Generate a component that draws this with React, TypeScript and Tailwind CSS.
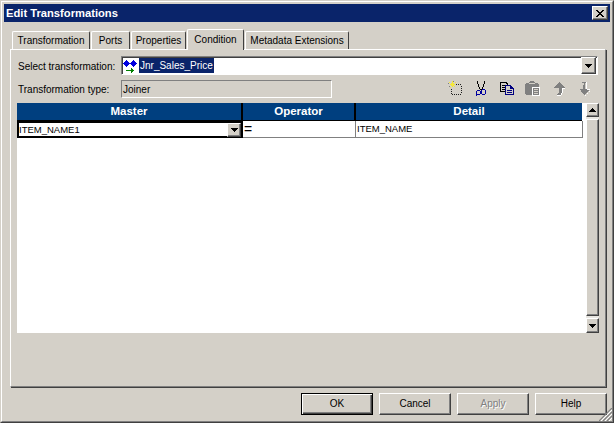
const raised = "border border-t-white border-l-white border-r-[#404040] border-b-[#404040] shadow-[inset_-1px_-1px_0_#808080]";

function Arrow({ up = false }: { up?: boolean }) {
  return (
    <svg width="7" height="4" viewBox="0 0 7 4" shapeRendering="crispEdges" className={up ? "rotate-180" : ""}>
      <path d="M0 0h7v1H0zM1 1h5v1H1zM2 2h3v1H2zM3 3h1v1H3z" fill="#000" />
    </svg>
  );
}

function Tab({ label, width, active = false }: { label: string; width: string; active?: boolean }) {
  return active ? (
    <div className={`${width} h-[21px] -mb-px z-10 flex items-start justify-center pt-[5px] whitespace-nowrap bg-[#d4d0c8] border-t border-l border-r border-t-white border-l-white border-r-[#404040] rounded-t-[2px]`}>
      {label}
    </div>
  ) : (
    <div className={`${width} h-[18px] flex items-center justify-center pt-px whitespace-nowrap bg-[#d4d0c8] border-t border-l border-r border-t-white border-l-white border-r-[#404040] rounded-t-[2px]`}>
      {label}
    </div>
  );
}

function Btn({ label, isDefault = false, disabled = false }: { label: string; isDefault?: boolean; disabled?: boolean }) {
  return (
    <div
      className={
        isDefault
          ? "w-[72px] h-[22px] flex items-center justify-center border border-black shadow-[inset_1px_1px_0_#fff,inset_-1px_-1px_0_#404040,inset_-2px_-2px_0_#808080]"
          : disabled
          ? `w-[72px] h-[22px] flex items-center justify-center text-[#808080] [text-shadow:1px_1px_0_#fff] ${raised}`
          : `w-[72px] h-[22px] flex items-center justify-center ${raised}`
      }
    >
      {label}
    </div>
  );
}

function Toolbar() {
  return (
    <div className="flex items-start h-[18px] pt-px ml-[116px]">
      {/* new */}
      <svg width="14" height="14" viewBox="0 0 14 14" shapeRendering="crispEdges">
        <path d="M6 3h1v1H6zM8 3h1v1H8zM10 3h1v1h-1zM12 3h1v1h-1zM13 5h1v1h-1zM13 7h1v1h-1zM13 9h1v1h-1zM13 11h1v1h-1zM12 13h1v1h-1zM10 13h1v1h-1zM8 13h1v1H8zM6 13h1v1H6zM4 13h1v1H4zM3 12h1v1H3zM3 10h1v1H3zM3 8h1v1H3z" fill="#202020" />
        <path d="M4 0h1v6H4zM2 3h5v1H2zM1 1h1v1H1zM7 1h1v1H7zM2 6h1v1H2zM6 5h1v1H6zM3 2h3v3H3z" fill="#f5e83a" />
        <path d="M0 2h1v1H0zM1 5h1v1H1zM5 0h1v1H5z" fill="#808080" />
      </svg>
      {/* cut */}
      <svg width="10" height="15" viewBox="0 0 10 15" className="ml-[14px]" shapeRendering="crispEdges">
        <path d="M1 0h1v3h1v3h1v2h2V6h1V3h1V0h1v3H8v3H7v2H6v1H4V8H3V6H2V3H1z" fill="#000" />
        <path d="M1 9h3v1h1v3H4v1H1v1H0V10h1zM1 10v3h3v-3zM6 8h3v1h1v4H9v1H6v-1H5V9h1zM6 9v4h3V9z" fill="#0000a0" />
      </svg>
      {/* copy */}
      <svg width="14" height="14" viewBox="0 0 14 14" className="ml-[14px]" shapeRendering="crispEdges">
        <path d="M0 1h7v1h1v2H7V3H6V2H1v8h4v1H0z" fill="#000" />
        <path d="M2 4h3v1H2zM2 6h3v1H2zM2 8h3v1H2z" fill="#000" />
        <path d="M5 4h6v1h1v1h1v1h1v7H5zM6 5v8h7V8h-3V5z" fill="#000080" />
        <path d="M7 9h5v1H7zM7 11h5v1H7z" fill="#000080" />
      </svg>
      {/* paste (disabled) */}
      <svg width="15" height="15" viewBox="0 0 15 15" className="ml-[11px]" shapeRendering="crispEdges">
        <path d="M0 3h1V2h3V1h1V0h4v1h1v1h3v1h1v4H8v7H1v-1H0z" fill="#808080" />
        <path d="M4 2h6v1H4z" fill="#d4d0c8" />
        <path d="M7 6h8v9H7z" fill="#fff" />
        <path d="M8 7h6v7H8z" fill="#808080" />
        <path d="M9 8h4v5H9z" fill="#d4d0c8" />
        <path d="M9 9h4v1H9zM9 11h4v1H9z" fill="#808080" />
      </svg>
      {/* up */}
      <svg width="12" height="15" viewBox="0 0 12 15" className="ml-[14px]" shapeRendering="crispEdges">
        <path d="M5 1h1v1h1v1h1v1h1v1h1v1h1v1H8v5H7v2H3v-1h1v-1h1V7H0V6h1V5h1V4h1V3h1V2h1z" fill="#808080" />
        <path d="M8 7h3v1H8zM8 8h1v4H8zM7 12h1v2H7zM3 14h4v1H3z" fill="#fff" />
      </svg>
      {/* down */}
      <svg width="12" height="15" viewBox="0 0 12 15" className="ml-[13px]" shapeRendering="crispEdges">
        <path d="M3 1h4v1H6v1H6v5h5v1h-1v1H9v1H8v1H7v1H6v1H5v-1H4v-1H3v-1H2V9H1V8h3V4h1V2H3z" fill="#808080" />
        <path d="M7 1h1v1H7zM7 2h1v6H7zM8 8h3v1H8zM10 10h1v1h-1zM8 12h1v1H8zM6 14h1v1H6z" fill="#fff" />
      </svg>
    </div>
  );
}

function Grid() {
  return (
    <div className="mt-[5px] w-[582px] h-[230px] flex bg-white">
      <div className="w-[569px] flex flex-col">
        <div className="flex h-[18px] w-[565px] bg-[#003f7f] text-white font-bold text-[11.5px] border-b border-b-black">
          <div className="w-[226px] flex items-center justify-center pt-px border-r-2 border-r-black">Master</div>
          <div className="w-[113px] flex items-center justify-center pt-px border-r-2 border-r-black">Operator</div>
          <div className="w-[226px] flex items-center justify-center pt-px">Detail</div>
        </div>
        <div className="flex h-[17px] w-[566px] text-[9.5px]">
          <div className="w-[226px] flex items-center justify-between border-2 border-black pr-0">
            <span>ITEM_NAME1</span>
            <div className={`w-[14px] h-[14px] flex items-center justify-center bg-[#d4d0c8] ${raised}`}>
              <Arrow />
            </div>
          </div>
          <div className="w-[113px] flex items-center pl-px text-[14px] border-r border-b border-r-[#808080] border-b-[#808080]">=</div>
          <div className="w-[227px] flex items-center pl-[1px] border-r border-b border-r-[#808080] border-b-[#808080]">ITEM_NAME</div>
        </div>
      </div>
      <div className="w-[13px] flex flex-col gap-[2px] bg-[#e8e6e1]">
        <div className={`h-[14px] bg-[#d4d0c8] flex items-center justify-center ${raised}`}>
          <Arrow up />
        </div>
        <div className={`flex-1 bg-[#d4d0c8] ${raised}`} />
        <div className={`h-[15px] bg-[#d4d0c8] flex items-center justify-center ${raised}`}>
          <Arrow />
        </div>
      </div>
    </div>
  );
}

export default function App() {
  return (
    <div className="relative w-[614px] h-[423px] overflow-hidden bg-[#d4d0c8] text-black text-[10px] leading-none font-['Liberation_Sans',Arial,sans-serif] border border-t-[#d4d0c8] border-l-[#d4d0c8] border-r-[#404040] border-b-[#404040]">
      <div className="h-full flex flex-col border border-t-white border-l-white border-r-[#808080] border-b-[#808080] p-[2px]">
        <div className="h-[18px] shrink-0 bg-[#0a246a] flex items-center justify-between pl-[2px] pr-[2px]">
          <span className="text-white font-bold text-[11.2px] pt-px">Edit Transformations</span>
          <div className={`w-[16px] h-[14px] flex items-center justify-center bg-[#d4d0c8] ${raised}`}>
            <svg width="8" height="7" viewBox="0 0 8 7" shapeRendering="crispEdges">
              <path d="M0 0h2v1h1v1h2V1h1V0h2v1H7v1H6v1H5v1h1v1h1v1h1v1H6V6H5V5H3v1H2v1H0V6h1V5h1V4h1V3H2V2H1V1H0z" fill="#000" />
            </svg>
          </div>
        </div>

        <div className="flex-1 flex flex-col pl-[6px] pr-[2px]">
          <div className="flex items-end h-[27px] pl-[2px] gap-[1px] shrink-0">
            <Tab label="Transformation" width="w-[78px]" />
            <Tab label="Ports" width="w-[39px]" />
            <Tab label="Properties" width="w-[55px]" />
            <Tab label="Condition" width="w-[57px]" active />
            <Tab label="Metadata Extensions" width="w-[104px]" />
          </div>
          <div className="h-[338px] w-[596px] shrink-0 border border-t-white border-l-white border-r-[#808080] border-b-[#808080] shadow-[1px_1px_0_#404040] pt-[6px] pl-[6px]">
            <div className="flex items-center h-[19px]">
              <span className="w-[104px] pl-px pt-[2px] whitespace-nowrap">Select transformation:</span>
              <div className="w-[477px] h-[19px] flex items-center bg-white border border-t-[#808080] border-l-[#808080] border-r-white border-b-white shadow-[inset_1px_1px_0_#404040]">
                <svg width="14" height="14" viewBox="0 0 14 14" className="ml-[1px] shrink-0" shapeRendering="crispEdges">
                  <path d="M3 1h1v1h1v1h1v1h1v1h-1v1h-1v1h-1v1h-1v-1h-1v-1h-1v-1h-1v-1h1v-1h1v-1h1zM10 1h1v1h1v1h1v1h1v1h-1v1h-1v1h-1v1h-1v-1h-1v-1h-1v-1h-1v-1h1v-1h1v-1h1z" fill="#0000e0" />
                  <path d="M3 11h7v1H3zM8 9h1v5H8zM9 10h1v3H9zM10 11h1v1h-1z" fill="#008000" />
                </svg>
                <span className="ml-[2px] bg-[#0a246a] text-white h-[15px] flex items-center px-[1px] pt-px">Jnr_Sales_Price</span>
                <div className={`ml-auto w-[15px] h-[17px] flex items-center justify-center bg-[#d4d0c8] mr-px ${raised}`}>
                  <Arrow />
                </div>
              </div>
            </div>
            <div className="flex items-center h-[18px] mt-[5px]">
              <span className="w-[104px] pl-px pt-[2px] whitespace-nowrap">Transformation type:</span>
              <div className="w-[211px] h-[18px] flex items-center pl-px pt-px border border-t-[#808080] border-l-[#808080] border-r-white border-b-white">Joiner</div>
              <Toolbar />
            </div>
            <Grid />
          </div>

          <div className="flex justify-end gap-[6px] mt-[6px] mr-[1px]">
            <Btn label="OK" isDefault />
            <Btn label="Cancel" />
            <Btn label="Apply" disabled />
            <Btn label="Help" />
          </div>
        </div>
      </div>
      <svg width="13" height="13" viewBox="0 0 13 13" className="absolute right-[1px] bottom-[1px]">
        <path d="M0 13L13 0M4 13L13 4M8 13L13 8" stroke="#808080" strokeWidth="1.2" />
        <path d="M2 13L13 2M6 13L13 6M10 13L13 10" stroke="#fff" strokeWidth="1" />
      </svg>
    </div>
  );
}
